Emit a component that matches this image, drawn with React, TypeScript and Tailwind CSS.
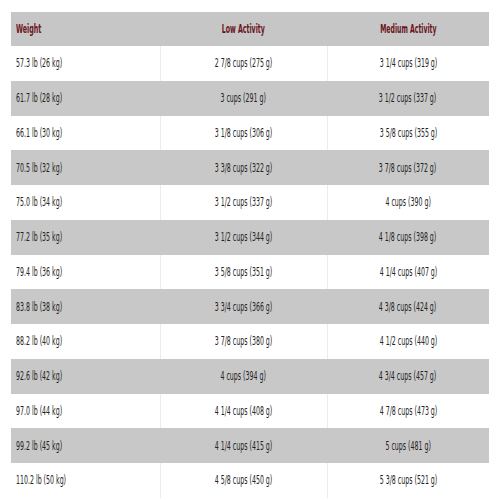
import React from 'react'

const rows: [string, string, string][] = [
  ['57.3 lb (26 kg)', '2 7/8 cups (275 g)', '3 1/4 cups (319 g)'],
  ['61.7 lb (28 kg)', '3 cups (291 g)', '3 1/2 cups (337 g)'],
  ['66.1 lb (30 kg)', '3 1/8 cups (306 g)', '3 5/8 cups (355 g)'],
  ['70.5 lb (32 kg)', '3 3/8 cups (322 g)', '3 7/8 cups (372 g)'],
  ['75.0 lb (34 kg)', '3 1/2 cups (337 g)', '4 cups (390 g)'],
  ['77.2 lb (35 kg)', '3 1/2 cups (344 g)', '4 1/8 cups (398 g)'],
  ['79.4 lb (36 kg)', '3 5/8 cups (351 g)', '4 1/4 cups (407 g)'],
  ['83.8 lb (38 kg)', '3 3/4 cups (366 g)', '4 3/8 cups (424 g)'],
  ['88.2 lb (40 kg)', '3 7/8 cups (380 g)', '4 1/2 cups (440 g)'],
  ['92.6 lb (42 kg)', '4 cups (394 g)', '4 3/4 cups (457 g)'],
  ['97.0 lb (44 kg)', '4 1/4 cups (408 g)', '4 7/8 cups (473 g)'],
  ['99.2 lb (45 kg)', '4 1/4 cups (415 g)', '5 cups (481 g)'],
  ['110.2 lb (50 kg)', '4 5/8 cups (450 g)', '5 3/8 cups (521 g)'],
]

const font = "font-['Liberation_Sans_Narrow','DejaVu_Sans_Condensed','Liberation_Sans',sans-serif]"

export default function App() {
  return (
    <div className={`w-[500px] h-[500px] bg-white pt-[12px] px-[11px] overflow-hidden ${font}`}>
      {/* header */}
      <div className="grid grid-cols-[149px_167px_162px] h-[34px] bg-[#c6c6c6] items-center text-[12px] font-bold text-[#6b1522]">
        <div className="pl-[5px] whitespace-nowrap"><span className="inline-block origin-left scale-x-[0.59]">Weight</span></div>
        <div className="text-center whitespace-nowrap"><span className="inline-block scale-x-[0.58]">Low Activity</span></div>
        <div className="text-center whitespace-nowrap"><span className="inline-block scale-x-[0.57]">Medium Activity</span></div>
      </div>

      {rows.map((r, i) => {
        const gray = i % 2 === 1
        return (
          <div
            key={r[0]}
            className={`grid grid-cols-[149px_167px_162px] h-[34.75px] items-center text-[12px] text-[#222] ${gray ? 'bg-[#c8c8c8]' : 'bg-white'}`}
          >
            <div className="pl-[5px] h-full flex items-center whitespace-nowrap">
              <span className="inline-block origin-left scale-x-[0.58]">{r[0]}</span>
            </div>
            <div className={`h-full flex items-center justify-center whitespace-nowrap ${gray ? '' : 'border-l border-[#ececec]'}`}>
              <span className="inline-block scale-x-[0.58]">{r[1]}</span>
            </div>
            <div className={`h-full flex items-center justify-center whitespace-nowrap ${gray ? '' : 'border-l border-[#ececec]'}`}>
              <span className="inline-block scale-x-[0.58]">{r[2]}</span>
            </div>
          </div>
        )
      })}
    </div>
  )
}
